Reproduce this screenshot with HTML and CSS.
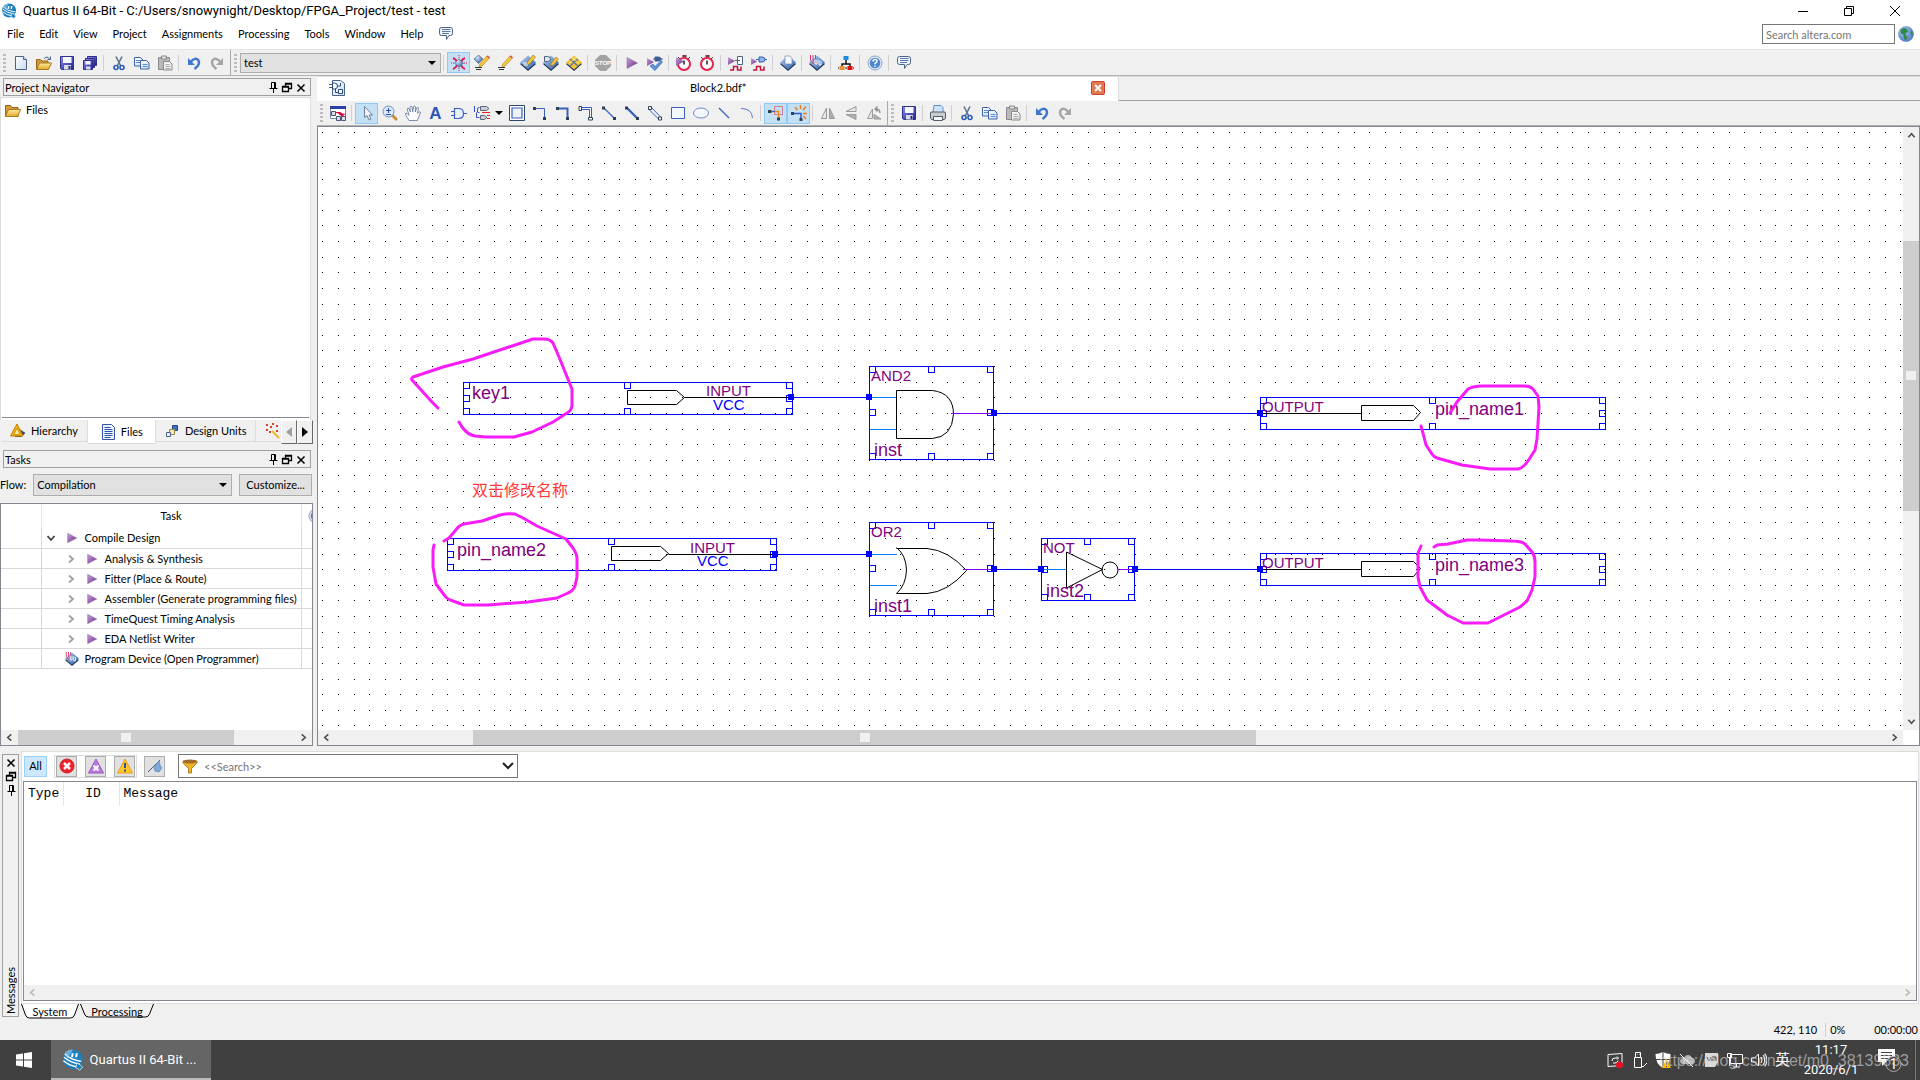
FILE: index.html
```html
<!DOCTYPE html>
<html lang="en">
<head>
    <meta charset="UTF-8">
    <meta name="viewport" content="width=device-width, initial-scale=1.0">
    <title>Quartus II 64-Bit</title>
    <link rel="stylesheet" href="styles.css">
</head>
<body>

<!-- Icon set -->
<svg class="sprite" aria-hidden="true">
    <defs>
        <linearGradient id="g-purple" x1="0" y1="0" x2="1" y2="1"><stop offset="0" stop-color="#c9a0dc"/><stop offset="1" stop-color="#6b2a86"/></linearGradient>
        <linearGradient id="g-blue" x1="0" y1="0" x2="1" y2="1"><stop offset="0" stop-color="#b9d2f5"/><stop offset="1" stop-color="#2c5da8"/></linearGradient>
        <linearGradient id="g-folder" x1="0" y1="0" x2="0" y2="1"><stop offset="0" stop-color="#ffe9a0"/><stop offset="1" stop-color="#e5a92c"/></linearGradient>
        <linearGradient id="g-save" x1="0" y1="0" x2="1" y2="1"><stop offset="0" stop-color="#8c8cf0"/><stop offset="1" stop-color="#20208c"/></linearGradient>
        <linearGradient id="g-page" x1="0" y1="0" x2="1" y2="1"><stop offset="0" stop-color="#fff"/><stop offset="1" stop-color="#c8dcf2"/></linearGradient>
        <radialGradient id="g-ball" cx=".35" cy=".3" r=".8"><stop offset="0" stop-color="#d5e6fb"/><stop offset="1" stop-color="#2d5796"/></radialGradient>
    </defs>

    <symbol id="i-logo" viewBox="0 0 16 16">
        <circle cx="8" cy="7.5" r="7" fill="#1b7fc0"/>
        <path d="M1.500 6Q6 10 13 11M1 8.500Q6 12.500 12 13M2 3.500Q6 8 14 9" stroke="#fff" fill="none"/>
        <path d="M7 3h1.500L8 6H6.500zM10 3h1.500L11 6H9.500z" fill="#fff"/>
        <path d="M2 3Q4 0 8 .5L4 7z" fill="#9ed0ee" opacity=".6"/>
        <path d="M11 10l4 3-2 2.500-3-2z" fill="#1b7fc0" stroke="#fff" stroke-width=".5"/>
    </symbol>
    <symbol id="i-chat" viewBox="0 0 16 16">
        <path d="M3.500 1.500h9q2 0 2 2v4q0 2-2 2h-1.500l-2.500 4v-4h-5q-2 0-2-2v-4q0-2 2-2z" fill="#eef4fc" stroke="#4a6286"/>
        <path d="M4 3.500h8.500M4 5.500h8.500M4 7.500h7" stroke="#5b7aa5" fill="none"/>
    </symbol>
    <symbol id="i-new" viewBox="0 0 16 16">
        <path d="M2.500 1.500h8l3 3v10h-11z" fill="url(#g-page)" stroke="#4a6286"/>
        <path d="M10.500 1.500v3h3" fill="#dce8f6" stroke="#4a6286"/>
    </symbol>
    <symbol id="i-open" viewBox="0 0 16 16">
        <path d="M.5 14.500v-10h4l1.500 1.500h6v8z" fill="#d49a3a" stroke="#94661a"/>
        <path d="M.5 14.500l3-6.500h12l-3 6.500z" fill="url(#g-folder)" stroke="#a87a20"/>
        <path d="M8 3.500q3-3 5.500 0M14.500 1.500v3h-3" stroke="#4a6286" fill="none"/>
    </symbol>
    <symbol id="i-folder" viewBox="0 0 16 16">
        <path d="M.5 13.500v-11h5l1.500 2h6v9z" fill="#d49a3a" stroke="#94661a"/>
        <path d="M.5 13.500l3-7h12l-3 7z" fill="url(#g-folder)" stroke="#a87a20"/>
    </symbol>
    <symbol id="i-save" viewBox="0 0 16 16">
        <path d="M1.500 1.500h13v13h-12l-1-1z" fill="url(#g-save)" stroke="#30308c"/>
        <path d="M4 2h8.500v6H4z" fill="#f4f7fd"/>
        <path d="M5 10h7v4.500H5z" fill="#d7dced"/><path d="M9.500 11h2v3h-2z" fill="#222a66"/>
    </symbol>
    <symbol id="i-saveall" viewBox="0 0 16 16">
        <path d="M5.500 1.500h9v9h-9z" fill="url(#g-save)" stroke="#30308c"/>
        <path d="M3.500 3.500h9v9h-9z" fill="url(#g-save)" stroke="#30308c"/>
        <path d="M1.500 5.500h9v9h-9z" fill="url(#g-save)" stroke="#30308c"/>
        <path d="M3.500 6h5v3.500h-5z" fill="#f4f7fd"/><path d="M4 11.500h4.500v3H4z" fill="#d7dced"/>
    </symbol>
    <symbol id="i-cut" viewBox="0 0 16 16">
        <path d="M5 1.500l4.500 9M11 1.500l-4.500 9" stroke="#5b7390" stroke-width="1.600" fill="none"/>
        <circle cx="5" cy="12.500" r="2" fill="none" stroke="#2b5bb8" stroke-width="1.600"/>
        <circle cx="11" cy="12.500" r="2" fill="none" stroke="#2b5bb8" stroke-width="1.600"/>
    </symbol>
    <symbol id="i-copy" viewBox="0 0 16 16">
        <path d="M.5 2.500h6l2.500 2.500v6h-8.500z" fill="url(#g-page)" stroke="#3d62ab"/>
        <path d="M6.500 5.500h6l2.500 2.500v6h-8.500z" fill="url(#g-page)" stroke="#3d62ab"/>
        <path d="M2 5.500h4M2 7.500h4M8.500 9.500h5M8.500 11.500h5" stroke="#5d8bd6"/>
    </symbol>
    <symbol id="i-paste" viewBox="0 0 16 16">
        <path d="M1.500 2.500h11v12h-11z" fill="#b9b9b9" stroke="#8a8a8a"/>
        <path d="M4.500 1h5v3h-5z" fill="#dedede" stroke="#8a8a8a"/>
        <path d="M6.500 6.500h6l2.500 2.500v6h-8.500z" fill="#f2f2f2" stroke="#8a8a8a"/>
        <path d="M8.500 9.500h4M8.500 11.500h5M8.500 13.500h5" stroke="#aaa"/>
    </symbol>
    <symbol id="i-undo" viewBox="0 0 16 16">
        <path d="M4.500 7q5-5.500 8-1.500 2 4-4 8.500" fill="none" stroke="#3f76cf" stroke-width="2.500"/>
        <path d="M2 3v7h7z" fill="#3f76cf"/>
    </symbol>
    <symbol id="i-redo" viewBox="0 0 16 16">
        <path d="M11.500 7q-5-5.500-8-1.500-2 4 4 8.500" fill="none" stroke="#a5a5a5" stroke-width="2.500"/>
        <path d="M14 3v7h-7z" fill="#a5a5a5"/>
    </symbol>
    <symbol id="i-chip" viewBox="0 0 16 16">
        <path d="M8 3l8 6-8 7-8-7z" fill="#1d3252"/>
        <path d="M8 .5l8 7-8 7-8-7z" fill="url(#g-blue)"/>
    </symbol>
    <symbol id="i-settings" viewBox="0 0 16 16">
        <path d="M2 3q3 1 4 4M14 3q-3 1-4 4M2 14q3-1 4-4M14 14q-3-1-4-4" stroke="#e8194e" stroke-width="2" fill="none"/>
        <path d="M8 0v3M8 13v3M0 8h3M13 8h3" stroke="#e8194e" stroke-dasharray="1 1"/>
        <path d="M8 4l4.500 4L8 12.500 3.500 8z" fill="url(#g-ball)" stroke="#33517e" stroke-width=".5"/>
    </symbol>
    <symbol id="i-pencil" viewBox="0 0 16 16">
        <path d="M13 1l2.500 2-7.500 8-3 1 .8-3z" fill="#f6c73c" stroke="#b0801c" stroke-width=".6"/>
        <path d="M12.500 1.500l1.200-1.200 2.300 2-1 1.200z" fill="#e2505c"/>
        <path d="M1 12.500h7M2 14.500h5" stroke="#333"/>
    </symbol>
    <symbol id="i-assign" viewBox="0 0 16 16">
        <path d="M4.500 0L9 4 4.500 8.500 0 4z" fill="url(#g-ball)" stroke="#26426e" stroke-width=".5"/>
        <use href="#i-pencil"/>
    </symbol>
    <symbol id="i-pins" viewBox="0 0 16 16">
        <use href="#i-chip"/>
        <path d="M13 0l2.500 2-6 7-3 1 1-3z" fill="#f6c73c" stroke="#9a6a10" stroke-width=".6"/>
        <path d="M3 8h4M4 10h4" stroke="#fff"/>
    </symbol>
    <symbol id="i-gatepen" viewBox="0 0 16 16">
        <use href="#i-chip"/>
        <path d="M1.500 1.500h3q3 0 3 2.500t-3 2.500h-3z" fill="#dde6f2" stroke="#51637c"/>
        <path d="M13 2l2.500 2-5 6-3 1 1-3z" fill="#f6c73c" stroke="#9a6a10" stroke-width=".6"/>
    </symbol>
    <symbol id="i-planner" viewBox="0 0 16 16">
        <path d="M8 3l8 6-8 7-8-7z" fill="#1d3252"/>
        <path d="M8 .5l8 7-8 7-8-7z" fill="#f5c22f"/>
        <path d="M4 4l8 7M12 4l-8 7" stroke="#5e7da8" stroke-width="1.600"/>
        <path d="M6 2.500l7 6M10 2.500l-7 6" stroke="#fff3c0" stroke-width=".6"/>
    </symbol>
    <symbol id="i-play" viewBox="0 0 16 16">
        <path d="M3 2.500l10.500 5.500L3 13.500z" fill="url(#g-purple)" stroke="#7d6b96" stroke-width=".5"/>
    </symbol>
    <symbol id="i-analyze" viewBox="0 0 16 16">
        <path d="M0 3l7 4-7 4z" fill="url(#g-purple)"/>
        <path d="M3 11l3-2 2 2.500 6-6 1.500 1.500L8 15.500z" fill="#5c93e0" stroke="#2c5da8" stroke-width=".6"/>
        <path d="M8 2h3q3 0 3 2t-3 2H8zM6 4h2M14 4h2" fill="#3f5f96" stroke="#3f5f96"/>
    </symbol>
    <symbol id="i-timer" viewBox="0 0 16 16">
        <path d="M7 0h3v2H7zM2 2l2 2M14 2l-2 2" fill="#e2244f" stroke="#444"/>
        <circle cx="8" cy="9" r="6" fill="#fff" stroke="#e2244f" stroke-width="2"/>
        <path d="M8 5.500v4" stroke="#222" stroke-width="1.500"/>
    </symbol>
    <symbol id="i-timeplay" viewBox="0 0 16 16">
        <use href="#i-timer"/><path d="M0 2l8 4.500L0 11z" fill="url(#g-purple)"/>
    </symbol>
    <symbol id="i-simrtl" viewBox="0 0 16 16">
        <path d="M0 2l7 4-7 4z" fill="url(#g-purple)"/>
        <path d="M9.500 1.500h5v8h-5zM7 5.500h5" fill="#fff" stroke="#4a6286"/>
        <path d="M2 15h3.500v-3.500h4V15H13v-3.500" fill="none" stroke="#c2143f" stroke-width="1.500"/>
    </symbol>
    <symbol id="i-simgate" viewBox="0 0 16 16">
        <path d="M0 3l6 3.500L0 10z" fill="url(#g-purple)"/>
        <path d="M8 2h3q3 0 3 2.500T11 7H8zM5 4.500h3M14 4.500h2" fill="#8fb2ea" stroke="#3a5fae"/>
        <path d="M2 15h3.500v-3.500h4V15H13v-3.500" fill="none" stroke="#c2143f" stroke-width="1.500"/>
    </symbol>
    <symbol id="i-chippage" viewBox="0 0 16 16">
        <use href="#i-chip"/>
        <path d="M5 1h5l2 2v6H5z" fill="#f5f8fc" stroke="#7d8da5" stroke-width=".7"/>
    </symbol>
    <symbol id="i-program" viewBox="0 0 16 16">
        <use href="#i-chip"/>
        <path d="M1.500 0v5q1 3 4 4M4 0v5q1 2 4 3M6.500 0v4" fill="none" stroke="#d8336c"/>
        <path d="M6 5v4h2V5m2 0v5h2V6" fill="none" stroke="#fff"/>
    </symbol>
    <symbol id="i-qsys" viewBox="0 0 16 16">
        <path d="M5.500 1h5v4h-5z" fill="#1b8be0"/><path d="M8 5v4M4 12V9h8v3" fill="none" stroke="#111" stroke-width="1.500"/>
        <path d="M1.500 11h5v4h-5z" fill="#f09030"/><path d="M9.500 11h5v4h-5z" fill="#e01010"/>
        <path d="M0 13h1M7 13h2M15 13h1" stroke="#111"/>
    </symbol>
    <symbol id="i-help" viewBox="0 0 16 16">
        <circle cx="8" cy="8" r="7" fill="#e4ecf6" stroke="#8aa5c8"/>
        <circle cx="8" cy="8" r="5.300" fill="#4e86cd"/>
        <path d="M6 6.500q0-2 2-2t2 1.800q0 1.200-2 2.200v.8M8 10.500v1.500" stroke="#fff" stroke-width="1.400" fill="none"/>
    </symbol>
    <symbol id="i-globe" viewBox="0 0 16 16">
        <circle cx="8" cy="8" r="7.800" fill="#6c9be0"/>
        <circle cx="8" cy="8" r="7.800" fill="url(#g-ball)" opacity=".5"/>
        <path d="M2.500 4l3-2 3.500 1 1 3-2.500 1 .5 3 1.500 1-1.500 3.500-2-2-.5-4-2.500-1zM13 4l2 3-1 3-1.500-3z" fill="#2c8c3c"/>
    </symbol>
    <symbol id="i-bdf" viewBox="0 0 16 16">
        <path d="M3.500.5h8l4 3v12h-12z" fill="url(#g-page)" stroke="#4a6286"/>
        <path d="M0 4.500h3M0 7.500h3" stroke="#4a6286"/>
        <path d="M3.500 3h2q3 0 3 3t-3 3h-2zM8.500 6h3V3M6.500 9v3.500h3M9.500 9.500h4v4h-4z" fill="#fff" stroke="#2b4a7c"/>
    </symbol>
    <symbol id="i-detach" viewBox="0 0 16 16">
        <path d="M.5 1.500h15v12H.5z" fill="#fff" stroke="#7b88a8"/><path d="M0 1h16v3H0z" fill="#2b3fa8"/>
        <path d="M1.500 6.500h4v4h-4zM6.500 11.500h4v4h-4zM11.500 11.500h4v4h-4z" fill="#d8dfec" stroke="#4a5876"/>
        <path d="M6 7.500h4.500q1.500 0 1.500 3M9.500 9h5L12 11.500z" fill="#d01040" stroke="#d01040"/>
    </symbol>
    <symbol id="i-arrow" viewBox="0 0 16 16">
        <path d="M5.500 1.500v11l2.500-2 2 4.500 2-1-2-4h3.500z" fill="#f4f6fa" stroke="#6d7f9c"/>
    </symbol>
    <symbol id="i-zoom" viewBox="0 0 16 16">
        <path d="M10 10l4 4" stroke="#c98a3a" stroke-width="3" stroke-linecap="round"/>
        <circle cx="6.500" cy="6.500" r="5.500" fill="#dce9fa" stroke="#6a8cc0"/>
        <path d="M4 5.500h5M6.500 3v5M4 9.500h5" stroke="#2b4fae"/>
    </symbol>
    <symbol id="i-hand" viewBox="0 0 16 16">
        <path d="M4 15.500L.7 10q-1-2.200 1.300-1.700l2 2-1.800-6.300q.6-1.700 1.800-.2L5.500 7l-.6-5q1-1.700 2.200-.2l.6 5L8.600 1.500q1.100-1.300 2 .3L10.300 7l1.600-4.300q1.600-.8 1.600.9l-1.100 4.700L14 6.800q1.900-.2 1.300 1.400l-3 7.300z" fill="#fbfcfe" stroke="#6d80a4" stroke-width=".9"/>
    </symbol>
    <symbol id="i-gate" viewBox="0 0 16 16">
        <path d="M3.500 3.500h4q5 0 5 5t-5 5h-4zM0 6.500h3M0 10.500h3M12.500 8.500h3.500" fill="#e8f0fc" stroke="#3a5fc0" stroke-width="1.200"/>
    </symbol>
    <symbol id="i-pintool" viewBox="0 0 16 16">
        <path d="M.5 1v6M3.500 7V4q0-1.500 2-1.500M5.500 7.500h-2M5.500 12.500h-3v-5" stroke="#3a4fc0" fill="none"/>
        <path d="M6.500 1.500h6l2.500 2-2.500 2h-6zM6.500 10.500h4l2.500 2-2.500 2h-4z" fill="#c7cdd6" stroke="#5c6778"/>
        <path d="M8 7.500h8M13 10.500h3M13 13.500h3" stroke="#e22"/>
    </symbol>
    <symbol id="i-block" viewBox="0 0 16 16">
        <path d="M.5.5h15v15H.5z" fill="#fff" stroke="#2b4a66"/><path d="M3 3h10v10H3z" fill="#eef3fb" stroke="#3a5fc0" stroke-width="1.200"/>
    </symbol>
    <symbol id="i-node" viewBox="0 0 16 16">
        <path d="M3 3.500h9.500V14" fill="none" stroke="#3a5fc0"/><path d="M1 2h3v3H1zM11 12h3v3h-3z" fill="#2b4055"/>
    </symbol>
    <symbol id="i-bus" viewBox="0 0 16 16">
        <path d="M3 3.500h9.500V14" fill="none" stroke="#3a5fc0" stroke-width="2"/><path d="M1 2h3v3H1zM11 12h3v3h-3z" fill="#2b4055"/>
    </symbol>
    <symbol id="i-conduit" viewBox="0 0 16 16">
        <path d="M3 2.500h10.500V13M3 4.500h8.500V13" fill="none" stroke="#3a5fc0"/><path d="M1 1.500h2.500v4H1zM10.500 12.500h4v2.500h-4z" fill="#fff" stroke="#2b4055"/>
    </symbol>
    <symbol id="i-dnode" viewBox="0 0 16 16">
        <path d="M3 3l10 10" stroke="#3a5fc0" stroke-width="1.200"/><path d="M1 1.500h3v3H1zM12 12h3v3h-3z" fill="#2b4055"/>
    </symbol>
    <symbol id="i-dbus" viewBox="0 0 16 16">
        <path d="M3 3l10 10" stroke="#3a5fc0" stroke-width="2.400"/><path d="M1 1.500h3v3H1zM12 12h3v3h-3z" fill="#2b4055"/>
    </symbol>
    <symbol id="i-dconduit" viewBox="0 0 16 16">
        <path d="M4 2l10.500 11M2 4.500L12.500 15" stroke="#3a5fc0"/><path d="M1.500 1.500h3v3h-3zM11.500 12h3v3h-3z" fill="#fff" stroke="#2b4055"/>
    </symbol>
    <symbol id="i-rect" viewBox="0 0 16 16"><path d="M1.500 2.500h13v11h-13z" fill="#f4f8fe" stroke="#3a5fc0"/></symbol>
    <symbol id="i-ellipse" viewBox="0 0 16 16"><ellipse cx="8" cy="8" rx="7.500" ry="5" fill="#f4f8fe" stroke="#6d8ad0"/></symbol>
    <symbol id="i-line" viewBox="0 0 16 16"><path d="M3 3l10 10" stroke="#3a5fc0" stroke-width="1.300"/></symbol>
    <symbol id="i-arc" viewBox="0 0 16 16"><path d="M2 3.500q11 0 11.500 9.500" fill="none" stroke="#5c78c0"/></symbol>
    <symbol id="i-rubber" viewBox="0 0 16 16">
        <path d="M6.500 1.500h8v8h-8z" fill="none" stroke="#e0203c" stroke-dasharray="1 1"/><path d="M4 6.500h6.500V13" fill="none" stroke="#ef8a1c" stroke-width="1.500"/>
        <path d="M0 5h3.500v3H0zM9 12.500h3v3H9z" fill="#2b4055"/><path d="M3 6.500h4" stroke="#3a5fc0"/>
    </symbol>
    <symbol id="i-partial" viewBox="0 0 16 16">
        <path d="M3 8.500h7V14" fill="none" stroke="#2f5ac8" stroke-width="1.500"/><path d="M0 7h3v3H0zM8.500 13h3v3h-3z" fill="#2b4055"/>
        <path d="M9.500 0v4M4 2l2.500 3M15 1.500L12 5M16 8.500h-4M15 14l-2.500-3" stroke="#ef7a1c" stroke-width="1.500"/>
    </symbol>
    <symbol id="i-fliph" viewBox="0 0 16 16"><path d="M6.500 3v10.500h-5z" fill="#e8e8e8" stroke="#9a9a9a"/><path d="M9.500 3v10.500h5z" fill="#b0b0b0" stroke="#9a9a9a"/></symbol>
    <symbol id="i-flipv" viewBox="0 0 16 16"><path d="M13 1.500v5H3z" fill="#e8e8e8" stroke="#9a9a9a"/><path d="M13 14.500v-5H3z" fill="#b0b0b0" stroke="#9a9a9a"/></symbol>
    <symbol id="i-rotate" viewBox="0 0 16 16"><path d="M6.500 4v9.500h-5z" fill="#e8e8e8" stroke="#9a9a9a"/><path d="M8 9.500v4.500h7z" fill="#b0b0b0" stroke="#9a9a9a"/><path d="M14 8q0-4-4-4M11.500 1.500L9 4l2.500 2.500" fill="none" stroke="#8a8a8a" stroke-width="1.300"/></symbol>
    <symbol id="i-print" viewBox="0 0 16 16">
        <path d="M4 .5h7l2 2V8H3z" fill="#cfe4fa" stroke="#5d8bd6"/>
        <path d="M1 7h14l.5 1v5l-1 1.500h-13L.5 13V8z" fill="#c9ccd2" stroke="#555d6b"/>
        <path d="M3.500 11.500h9v4h-9z" fill="#f3f5f8" stroke="#555d6b"/>
    </symbol>

    <symbol id="i-pin" viewBox="0 0 12 12"><path d="M4.500.5h4v6h-4zM7.500 1v5M2.500 6.500h8M6.500 7v4" fill="none" stroke="#000"/></symbol>
    <symbol id="i-float" viewBox="0 0 12 12"><path d="M4 2h7M4.500 4V1.500h6v5H8M1 5h7M1.500 4.500h6v5h-6z" fill="none" stroke="#000" stroke-width="1.300"/></symbol>
    <symbol id="i-close" viewBox="0 0 12 12"><path d="M2.500 2.500l7 7M9.500 2.500l-7 7" stroke="#000" stroke-width="1.500"/></symbol>
    <symbol id="i-chev" viewBox="0 0 10 10"><path d="M3 1.500L7 5 3 8.500" fill="none" stroke="currentColor" stroke-width="1.800"/></symbol>
    <symbol id="i-down" viewBox="0 0 8 4"><path d="M0 0h8L4 4z"/></symbol>

    <symbol id="i-hierarchy" viewBox="0 0 16 16">
        <path d="M8 5l7.500 5L11 14H5z" fill="#3a4a5e"/><path d="M7 1l6 12H.5z" fill="#f4b400" stroke="#c07c00"/><path d="M7 5l3 6.500H4z" fill="#ffe9a0" stroke="#b27500" stroke-width=".6"/>
    </symbol>
    <symbol id="i-doc" viewBox="0 0 16 16"><path d="M2.500.5h9l3 3v12h-12z" fill="#eef3fc" stroke="#3454a4"/><path d="M4.500 3.500h6M4.500 5.500h8M4.500 7.500h8M4.500 9.500h8M4.500 11.500h8M4.500 13.500h6" stroke="#2f50b4"/></symbol>
    <symbol id="i-units" viewBox="0 0 16 16"><path d="M8.500 2.500h5v5h-5z" fill="#3f6fc8" stroke="#2a4780"/><path d="M5.500 6.500h5v5h-5z" fill="#f3e9b8" stroke="#9a8a4a"/><path d="M2.500 9.500h4v4h-4z" fill="#e9eff9" stroke="#4a6286"/></symbol>
    <symbol id="i-wand" viewBox="0 0 16 16"><path d="M8 8l7 7" stroke="#e8b830" stroke-width="2"/><path d="M2 2h2M6 4h2M2 7h2M8 1h2M12 3h2M5 9h2M12 8h2" stroke="#d8402c" stroke-width="2"/></symbol>

    <symbol id="i-error" viewBox="0 0 16 16"><circle cx="8" cy="8" r="7" fill="#f0202c" stroke="#c8202a"/><path d="M5 5l6 6M11 5l-6 6" stroke="#fff" stroke-width="2.500"/></symbol>
    <symbol id="i-critical" viewBox="0 0 16 16"><path d="M8 1l7.500 14H.5z" fill="#b878dc" stroke="#9858c0"/><path d="M5.500 7.500l5 5M10.500 7.500l-5 5" stroke="#fff" stroke-width="2"/></symbol>
    <symbol id="i-warning" viewBox="0 0 16 16"><path d="M8 1l7.500 14H.5z" fill="#ffc62e" stroke="#e8a010"/><path d="M8 5v5M8 11.500v2" stroke="#2f5590" stroke-width="2"/></symbol>
    <symbol id="i-flag" viewBox="0 0 16 16"><path d="M1 14L13 2" stroke="#4a5a70"/><path d="M9 6l3-3 1 4 2 3-3 4-4-1-1-3z" fill="#7fa8dc" stroke="#5578ac" stroke-width=".6"/></symbol>
    <symbol id="i-funnel" viewBox="0 0 16 16"><path d="M1 3v2l5.500 5.500v4.500h3v-4.500L15 5V3z" fill="#f0b428" stroke="#a06c18" stroke-width=".8"/><ellipse cx="8" cy="3.500" rx="7" ry="2" fill="#a06c28"/></symbol>

    <!-- Schematic parts -->
    <symbol id="s-dots" overflow="visible"><path d="M0 0h1v1H0zM16 0h1v1h-1zM32 0h1v1h-1zM47 0h1v1h-1zM63 0h1v1h-1zM78 0h1v1h-1zM94 0h1v1h-1zM110 0h1v1h-1z"/></symbol>
    <symbol id="s-h" overflow="visible"><path class="handle" d="M.5.5h6v6h-6z"/></symbol>
    <symbol id="s-inbox" overflow="visible">
        <path class="outline" d="M.5.5h329v32H.5z"/>
        <use href="#s-h"/><use href="#s-h" y="13"/><use href="#s-h" y="26"/>
        <use href="#s-h" x="161"/><use href="#s-h" x="161" y="26"/>
        <use href="#s-h" x="323"/><use href="#s-h" x="323" y="13"/><use href="#s-h" x="323" y="26"/>
        <path class="shape" d="M164.500 8.500h49l8 7-8 7h-49z"/>
    </symbol>
    <symbol id="s-gatebox" overflow="visible">
        <path class="outline" d="M.5.5h124v93H.5z"/>
        <use href="#s-h"/><use href="#s-h" x="59"/><use href="#s-h" x="118"/>
        <use href="#s-h" y="43"/><use href="#s-h" x="118" y="43"/>
        <use href="#s-h" y="87"/><use href="#s-h" x="59" y="87"/><use href="#s-h" x="118" y="87"/>
    </symbol>
    <symbol id="s-out" overflow="visible">
        <path class="outline" d="M.5.5h345v32H.5z"/>
        <use href="#s-h"/><use href="#s-h" y="13"/><use href="#s-h" y="26"/>
        <use href="#s-h" x="169"/><use href="#s-h" x="169" y="26"/>
        <use href="#s-h" x="339"/><use href="#s-h" x="339" y="13"/><use href="#s-h" x="339" y="26"/>
        <path class="shape" d="M.5 16.500h101M101.500 8.500h52l7 7-7 8h-52z"/>
        <path class="node" d="M-3 13h6v6h-6z"/>
    </symbol>
</svg>

<div class="app">

    <header class="titlebar">
        <svg class="icon"><use href="#i-logo"/></svg>
        <h1>Quartus II 64-Bit - C:/Users/snowynight/Desktop/FPGA_Project/test - test</h1>
        <div class="window-buttons">
            <button aria-label="Minimize"><svg viewBox="0 0 12 12"><path d="M1 6.500h10"/></svg></button>
            <button aria-label="Restore"><svg viewBox="0 0 12 12"><path d="M1.500 3.500h7v7h-7zM3.500 3V1.500h7v7H9"/></svg></button>
            <button aria-label="Close"><svg viewBox="0 0 12 12"><path d="M1 1l10 10M11 1L1 11"/></svg></button>
        </div>
    </header>

    <nav class="menubar">
        <button>File</button>
        <button>Edit</button>
        <button>View</button>
        <button>Project</button>
        <button>Assignments</button>
        <button>Processing</button>
        <button>Tools</button>
        <button>Window</button>
        <button>Help</button>
        <button aria-label="Feedback"><svg class="icon"><use href="#i-chat"/></svg></button>
        <div class="site-search">
            <input type="text" placeholder="Search altera.com" aria-label="Search altera.com">
            <button aria-label="Go"><svg class="icon"><use href="#i-globe"/></svg></button>
        </div>
    </nav>

    <div class="toolbar main-toolbar">
        <i class="grip"></i>
        <button aria-label="New"><svg class="icon"><use href="#i-new"/></svg></button>
        <button aria-label="Open"><svg class="icon"><use href="#i-open"/></svg></button>
        <button aria-label="Save"><svg class="icon"><use href="#i-save"/></svg></button>
        <button aria-label="Save all"><svg class="icon"><use href="#i-saveall"/></svg></button>
        <i class="sep"></i>
        <button aria-label="Cut"><svg class="icon"><use href="#i-cut"/></svg></button>
        <button aria-label="Copy"><svg class="icon"><use href="#i-copy"/></svg></button>
        <button aria-label="Paste"><svg class="icon"><use href="#i-paste"/></svg></button>
        <i class="sep"></i>
        <button aria-label="Undo"><svg class="icon"><use href="#i-undo"/></svg></button>
        <button aria-label="Redo"><svg class="icon"><use href="#i-redo"/></svg></button>
        <i class="divider"></i>
        <i class="grip"></i>
        <span class="combo revision">
            <select aria-label="Revision"><option>test</option></select>
            <svg><use href="#i-down"/></svg>
        </span>
        <i class="sep"></i>
        <button class="active" aria-label="Settings"><svg class="icon"><use href="#i-settings"/></svg></button>
        <button aria-label="Assignment editor"><svg class="icon"><use href="#i-assign"/></svg></button>
        <button aria-label="Edit"><svg class="icon"><use href="#i-pencil"/></svg></button>
        <button aria-label="Pin planner"><svg class="icon"><use href="#i-pins"/></svg></button>
        <button aria-label="Partitions"><svg class="icon"><use href="#i-gatepen"/></svg></button>
        <button aria-label="Chip planner"><svg class="icon"><use href="#i-planner"/></svg></button>
        <i class="sep"></i>
        <button aria-label="Stop"><svg class="icon" viewBox="0 0 16 16"><path d="M5 0h6l5 5v6l-5 5H5l-5-5V5z" fill="#a3a3a3"/><text x="8" y="10" text-anchor="middle" class="icon-stop">STOP</text></svg></button>
        <i class="sep"></i>
        <button aria-label="Start compilation"><svg class="icon"><use href="#i-play"/></svg></button>
        <button aria-label="Start analysis"><svg class="icon"><use href="#i-analyze"/></svg></button>
        <i class="sep"></i>
        <button aria-label="Start timing"><svg class="icon"><use href="#i-timeplay"/></svg></button>
        <button aria-label="TimeQuest"><svg class="icon"><use href="#i-timer"/></svg></button>
        <i class="sep"></i>
        <button aria-label="RTL simulation"><svg class="icon"><use href="#i-simrtl"/></svg></button>
        <button aria-label="Gate simulation"><svg class="icon"><use href="#i-simgate"/></svg></button>
        <i class="sep"></i>
        <button aria-label="Report"><svg class="icon"><use href="#i-chippage"/></svg></button>
        <i class="sep"></i>
        <button aria-label="Programmer"><svg class="icon"><use href="#i-program"/></svg></button>
        <i class="sep"></i>
        <button aria-label="Qsys"><svg class="icon"><use href="#i-qsys"/></svg></button>
        <i class="sep"></i>
        <button aria-label="Help"><svg class="icon"><use href="#i-help"/></svg></button>
        <i class="sep"></i>
        <button aria-label="Feedback"><svg class="icon"><use href="#i-chat"/></svg></button>
    </div>

    <main class="workspace">

        <aside class="dock">
            <section class="navigator">
                <div class="dock-title">
                    <h2>Project Navigator</h2>
                    <button aria-label="Pin"><svg><use href="#i-pin"/></svg></button>
                    <button aria-label="Float"><svg><use href="#i-float"/></svg></button>
                    <button aria-label="Close"><svg><use href="#i-close"/></svg></button>
                </div>
                <div class="file-tree">
                    <div class="file-list">
                        <svg class="icon"><use href="#i-folder"/></svg>
                        <span>Files</span>
                    </div>
                </div>
                <div class="dock-tabs">
                    <button><svg class="icon"><use href="#i-hierarchy"/></svg>Hierarchy</button>
                    <button class="current"><svg class="icon"><use href="#i-doc"/></svg>Files</button>
                    <button><svg class="icon"><use href="#i-units"/></svg>Design Units</button>
                    <button class="cut-tab" aria-label="IP Components"><svg class="icon"><use href="#i-wand"/></svg></button>
                    <div class="tab-scroll">
                        <button class="off" aria-label="Previous tabs"><svg viewBox="0 0 8 12"><path d="M7 1v10L1 6z"/></svg></button>
                        <button aria-label="Next tabs"><svg viewBox="0 0 8 12"><path d="M1 1v10l6-5z"/></svg></button>
                    </div>
                </div>
            </section>

            <section class="tasks">
                <div class="dock-title">
                    <h2>Tasks</h2>
                    <button aria-label="Pin"><svg><use href="#i-pin"/></svg></button>
                    <button aria-label="Float"><svg><use href="#i-float"/></svg></button>
                    <button aria-label="Close"><svg><use href="#i-close"/></svg></button>
                </div>
                <div class="flow-row">
                    <label for="flow">Flow:</label>
                    <span class="combo">
                        <select id="flow"><option>Compilation</option></select>
                        <svg><use href="#i-down"/></svg>
                    </span>
                    <button class="customize">Customize...</button>
                </div>
                <div class="task-box">
                    <table class="task-table">
                        <colgroup><col class="c-status"><col class="c-task"><col></colgroup>
                        <thead>
                            <tr><th></th><th>Task</th><th><svg class="icon"><use href="#i-help"/></svg></th></tr>
                        </thead>
                        <tbody>
                            <tr><td></td><td><div class="task"><svg class="chev open"><use href="#i-chev"/></svg><svg class="icon"><use href="#i-play"/></svg>Compile Design</div></td><td></td></tr>
                            <tr><td></td><td><div class="task sub"><svg class="chev"><use href="#i-chev"/></svg><svg class="icon"><use href="#i-play"/></svg>Analysis &amp; Synthesis</div></td><td></td></tr>
                            <tr><td></td><td><div class="task sub"><svg class="chev"><use href="#i-chev"/></svg><svg class="icon"><use href="#i-play"/></svg>Fitter (Place &amp; Route)</div></td><td></td></tr>
                            <tr><td></td><td><div class="task sub"><svg class="chev"><use href="#i-chev"/></svg><svg class="icon"><use href="#i-play"/></svg>Assembler (Generate programming files)</div></td><td></td></tr>
                            <tr><td></td><td><div class="task sub"><svg class="chev"><use href="#i-chev"/></svg><svg class="icon"><use href="#i-play"/></svg>TimeQuest Timing Analysis</div></td><td></td></tr>
                            <tr><td></td><td><div class="task sub"><svg class="chev"><use href="#i-chev"/></svg><svg class="icon"><use href="#i-play"/></svg>EDA Netlist Writer</div></td><td></td></tr>
                            <tr><td></td><td><div class="task leaf"><svg class="icon"><use href="#i-program"/></svg>Program Device (Open Programmer)</div></td><td></td></tr>
                        </tbody>
                    </table>
                    <div class="scrollbar">
                        <svg class="arrow left"><use href="#i-chev"/></svg>
                        <div class="track"><div class="thumb thumb-tasks"></div></div>
                        <svg class="arrow"><use href="#i-chev"/></svg>
                    </div>
                </div>
            </section>
        </aside>

        <section class="editor">
            <div class="editor-tabs">
                <div class="editor-tab">
                    <svg class="icon"><use href="#i-bdf"/></svg>
                    <span>Block2.bdf*</span>
                    <button aria-label="Close tab"><svg viewBox="0 0 12 12"><path d="M3 3l6 6M9 3L3 9"/></svg></button>
                </div>
            </div>

            <div class="toolbar">
                <i class="grip"></i>
                <button aria-label="Detach window"><svg class="icon"><use href="#i-detach"/></svg></button>
                <i class="sep"></i>
                <button class="active" aria-label="Select"><svg class="icon"><use href="#i-arrow"/></svg></button>
                <button aria-label="Zoom"><svg class="icon"><use href="#i-zoom"/></svg></button>
                <button aria-label="Hand"><svg class="icon"><use href="#i-hand"/></svg></button>
                <button class="letter" aria-label="Text">A</button>
                <button aria-label="Symbol"><svg class="icon"><use href="#i-gate"/></svg></button>
                <button aria-label="Pin tool"><svg class="icon"><use href="#i-pintool"/></svg></button>
                <button class="drop" aria-label="Pin types"><svg><use href="#i-down"/></svg></button>
                <button aria-label="Block"><svg class="icon"><use href="#i-block"/></svg></button>
                <button aria-label="Orthogonal node"><svg class="icon"><use href="#i-node"/></svg></button>
                <button aria-label="Orthogonal bus"><svg class="icon"><use href="#i-bus"/></svg></button>
                <button aria-label="Orthogonal conduit"><svg class="icon"><use href="#i-conduit"/></svg></button>
                <button aria-label="Diagonal node"><svg class="icon"><use href="#i-dnode"/></svg></button>
                <button aria-label="Diagonal bus"><svg class="icon"><use href="#i-dbus"/></svg></button>
                <button aria-label="Diagonal conduit"><svg class="icon"><use href="#i-dconduit"/></svg></button>
                <button aria-label="Rectangle"><svg class="icon"><use href="#i-rect"/></svg></button>
                <button aria-label="Oval"><svg class="icon"><use href="#i-ellipse"/></svg></button>
                <button aria-label="Line"><svg class="icon"><use href="#i-line"/></svg></button>
                <button aria-label="Arc"><svg class="icon"><use href="#i-arc"/></svg></button>
                <i class="sep"></i>
                <button class="active" aria-label="Rubberbanding"><svg class="icon"><use href="#i-rubber"/></svg></button>
                <button class="active" aria-label="Partial line selection"><svg class="icon"><use href="#i-partial"/></svg></button>
                <i class="sep"></i>
                <button aria-label="Flip horizontal"><svg class="icon"><use href="#i-fliph"/></svg></button>
                <button aria-label="Flip vertical"><svg class="icon"><use href="#i-flipv"/></svg></button>
                <button aria-label="Rotate left"><svg class="icon"><use href="#i-rotate"/></svg></button>
                <i class="divider"></i>
                <i class="grip"></i>
                <button aria-label="Save"><svg class="icon"><use href="#i-save"/></svg></button>
                <i class="sep"></i>
                <button aria-label="Print"><svg class="icon"><use href="#i-print"/></svg></button>
                <i class="sep"></i>
                <button aria-label="Cut"><svg class="icon"><use href="#i-cut"/></svg></button>
                <button aria-label="Copy"><svg class="icon"><use href="#i-copy"/></svg></button>
                <button aria-label="Paste"><svg class="icon"><use href="#i-paste"/></svg></button>
                <i class="sep"></i>
                <button aria-label="Undo"><svg class="icon"><use href="#i-undo"/></svg></button>
                <button aria-label="Redo"><svg class="icon"><use href="#i-redo"/></svg></button>
            </div>

            <div class="canvas-box">
                <svg class="schematic">
                    <defs>
                        <pattern id="grid" x="4" y="-42" width="125" height="125" patternUnits="userSpaceOnUse">
                            <g shape-rendering="crispEdges">
                                <use href="#s-dots"/><use href="#s-dots" y="15"/><use href="#s-dots" y="31"/><use href="#s-dots" y="47"/>
                                <use href="#s-dots" y="62"/><use href="#s-dots" y="78"/><use href="#s-dots" y="94"/><use href="#s-dots" y="109"/>
                            </g>
                        </pattern>
                    </defs>
                    <rect width="100%" height="100%" fill="url(#grid)"/>

                    <!-- Wires -->
                    <path class="wire" d="M475 270.500h76M678 286.500h262M459 427.500h92M678 442.500h43M819 442.500h121"/>

                    <!-- Input pins -->
                    <use href="#s-inbox" x="145" y="255"/>
                    <path class="shape" d="M366.500 270.500h106"/>
                    <path class="node" d="M470 267h6v6h-6z"/>
                    <text class="part purple" x="388" y="269">INPUT</text>
                    <text class="part blue" x="395" y="283">VCC</text>
                    <text class="name" x="154" y="272">key1</text>
                    <use href="#s-inbox" x="129" y="411"/>
                    <path class="shape" d="M350.500 427.500h106"/>
                    <path class="node" d="M454 424h6v6h-6z"/>
                    <text class="part purple" x="372" y="426">INPUT</text>
                    <text class="part blue" x="379" y="439">VCC</text>
                    <text class="name" x="139" y="429">pin_name2</text>

                    <!-- AND2 -->
                    <use href="#s-gatebox" x="551" y="239"/>
                    <path class="in" d="M552 270.500h26M552 302.500h26"/>
                    <path class="shape" d="M578.500 263.500h36Q635.500 266 635.500 287.500 634 310 614.500 311.500h-36z"/>
                    <path class="out" d="M633 286.500h42"/>
                    <path class="node" d="M548 267h6v6h-6zM673 283h6v6h-6z"/>
                    <text class="part purple" x="553" y="254">AND2</text>
                    <text class="name" x="556" y="329">inst</text>

                    <!-- OR2 -->
                    <use href="#s-gatebox" x="551" y="395"/>
                    <path class="in" d="M552 427.500h27M552 458.500h27"/>
                    <path class="shape" d="M578.500 420.500Q588 428 588.500 443 588 458 578.500 466.500H609Q630 465 648.500 443.500 630 423 609 421.500H578.500"/>
                    <path class="out" d="M645 442.500h30"/>
                    <path class="node" d="M548 424h6v6h-6zM673 439h6v6h-6z"/>
                    <text class="part purple" x="553" y="410">OR2</text>
                    <text class="name" x="556" y="485">inst1</text>

                    <!-- NOT -->
                    <path class="outline" d="M723.500 411.500h93v62h-93z"/>
                    <use href="#s-h" x="723" y="411"/><use href="#s-h" x="766" y="411"/><use href="#s-h" x="810" y="411"/>
                    <use href="#s-h" x="723" y="439"/><use href="#s-h" x="810" y="439"/>
                    <use href="#s-h" x="723" y="467"/><use href="#s-h" x="766" y="467"/><use href="#s-h" x="810" y="467"/>
                    <path class="in" d="M724 442.500h24"/>
                    <path class="shape" d="M748.500 425v36l36-18.500z"/>
                    <circle class="shape" cx="792" cy="443" r="8"/>
                    <path class="out" d="M800 442.500h16"/>
                    <path class="node" d="M720 439h6v6h-6zM814 439h6v6h-6z"/>
                    <text class="part purple" x="725" y="426">NOT</text>
                    <text class="name" x="728" y="470">inst2</text>

                    <!-- Output pins -->
                    <use href="#s-out" x="942" y="270"/>
                    <text class="part purple" x="944" y="285">OUTPUT</text>
                    <text class="name" x="1117" y="288">pin_name1</text>
                    <use href="#s-out" x="942" y="426"/>
                    <text class="part purple" x="944" y="441">OUTPUT</text>
                    <text class="name" x="1117" y="444">pin_name3</text>

                    <!-- Pen notes -->
                    <g transform="translate(-318 -127)">
                        <path class="pen" d="M438 408L432 402 412 380Q411 378 413 377L443 367 473 359 533 339H544Q550 339 553 343L559 357 572 389V406Q571 411 567 413L553 422 532 432 514 437H486L475 436Q468 435 462 427L459 422"/>
                        <path class="pen" d="M444 541L449 538 455 531Q459 525 464 524L482 521 500 515Q508 513 515 514L523 518 537 526 566 539 573 548Q577 554 577 558V577L575 586Q573 591 568 593L557 598 528 602 488 605H464L453 601Q447 599 445 596L436 584 433 567V550L434 545"/>
                        <path class="pen" d="M1450 413L1457 402 1468 389Q1474 386 1482 386H1525Q1530 386 1533 389L1538 396 1539 407 1537 439 1535 450 1528 461Q1523 468 1518 469H1490L1462 465 1437 458Q1434 457 1432 454L1426 445 1424 437 1421 426"/>
                        <path class="pen" d="M1434 547L1437 545 1448 544 1467 540H1478L1512 541Q1521 541 1525 544L1532 552Q1535 556 1535 562V577L1532 590 1527 601 1520 607 1504 615 1488 623H1463L1447 615 1427 600 1420 587 1418 577V553L1421 546"/>
                    </g>
                    <text class="note" x="154" y="369">双击修改名称</text>
                </svg>
                <div class="scrollbar vertical">
                    <svg class="arrow up"><use href="#i-chev"/></svg>
                    <div class="track"><div class="thumb thumb-v"></div></div>
                    <svg class="arrow down"><use href="#i-chev"/></svg>
                </div>
                <div class="scrollbar">
                    <svg class="arrow left"><use href="#i-chev"/></svg>
                    <div class="track"><div class="thumb thumb-h"></div></div>
                    <svg class="arrow"><use href="#i-chev"/></svg>
                </div>
            </div>
        </section>
    </main>

    <section class="messages">
        <div class="side-title">
            <button aria-label="Close"><svg><use href="#i-close"/></svg></button>
            <button aria-label="Float"><svg><use href="#i-float"/></svg></button>
            <button aria-label="Pin"><svg><use href="#i-pin"/></svg></button>
            <h2>Messages</h2>
        </div>
        <div class="message-area">
            <div class="message-panel">
                <div class="message-tools">
                    <button class="all">All</button>
                    <div class="filter-group">
                        <button aria-label="Errors"><svg class="icon"><use href="#i-error"/></svg></button>
                        <button aria-label="Critical warnings"><svg class="icon"><use href="#i-critical"/></svg></button>
                        <button aria-label="Warnings"><svg class="icon"><use href="#i-warning"/></svg></button>
                    </div>
                    <button aria-label="Flagged"><svg class="icon"><use href="#i-flag"/></svg></button>
                    <div class="message-search">
                        <svg class="icon"><use href="#i-funnel"/></svg>
                        <input type="text" placeholder="&lt;&lt;Search&gt;&gt;" aria-label="Search messages">
                        <svg class="caret" viewBox="0 0 12 8"><path d="M1 1l5 5 5-5"/></svg>
                    </div>
                </div>
                <div class="message-box">
                    <table class="message-table">
                        <thead><tr><th>Type</th><th>ID</th><th>Message</th></tr></thead>
                    </table>
                    <div class="scrollbar off">
                        <svg class="arrow left"><use href="#i-chev"/></svg>
                        <div class="track"></div>
                        <svg class="arrow"><use href="#i-chev"/></svg>
                    </div>
                </div>
            </div>
            <div class="message-tabs">
                <button class="current"><svg viewBox="0 0 58 15" preserveAspectRatio="none"><path d="M.5 0l4 11q1 3 4 3h41q3 0 4-3l4-11"/></svg><span>System</span></button>
                <button><svg viewBox="0 0 74 15" preserveAspectRatio="none"><path d="M.5 0l4 10q1 3 4 3h57q3 0 4-3l4-10"/></svg><span>Processing</span></button>
            </div>
        </div>
    </section>

    <footer class="statusbar">
        <span>422, 110</span>
        <span class="percent">0%</span>
        <span>00:00:00</span>
    </footer>

    <div class="taskbar">
        <button class="start" aria-label="Start"><svg viewBox="0 0 16 16"><path d="M0 2.500l7-1v6H0zM8 1.300L16 0v7.500H8zM0 8.500h7v6l-7-1zM8 8.500h8V16l-8-1.300z"/></svg></button>
        <button class="running"><svg><use href="#i-logo"/></svg>Quartus II 64-Bit ...</button>
        <div class="tray">
            <svg viewBox="0 0 16 16"><path d="M1 2.500l14-1v12l-14 1zM5 9q0-3 3-3h3M11 8.500q0 2.500-3 2.500H6M10 4.500l1.500 1.500L10 7.500"/><circle cx="12.500" cy="13" r="3.500" class="rec"/></svg>
            <svg viewBox="0 0 16 16"><path d="M4.500.5h5v5h-5zM3.500 5.500h7v10h-7zM6 2.500h.5M8 2.500h.5M10 13l2 2 4-4"/></svg>
            <svg viewBox="0 0 16 16"><path class="solid" d="M8 0q4 2 7.500 2 0 10-7.500 14Q.5 12 .5 2 4 2 8 0z"/><path class="ink" d="M8 0v16M.5 7.500h15"/><path class="warn" d="M11.500 7l4.500 9H7z"/><path class="ink" d="M11.500 10v3M11.500 14v1"/></svg>
            <svg viewBox="0 0 16 16"><path class="solid" d="M4 12q-3 0-3-3t4-3q1-3 4-3t4 3q3 0 3 3t-3 3z" opacity=".6"/><path d="M1 2l13 13"/></svg>
            <svg viewBox="0 0 16 16"><path class="solid" d="M2 1h13v9l-3 5H2z" opacity=".8"/><path class="ink" d="M4 5l2 4 2-4M9 9V5h4v4M11 5v4"/></svg>
            <svg viewBox="0 0 16 16"><path d="M3.500 2.500h12v9h-12zM9.500 12v3M6 15h7M.5 1.500h4v4h-4zM2.500 5v9"/></svg>
            <svg viewBox="0 0 16 16"><path d="M.5 6v4h3l4 4V2l-4 4zM10 5q2 3 0 6M12 3q3.500 5 0 10M14 1.500q4 6.500 0 13"/></svg>
            <span class="ime">英</span>
            <time class="clock">11:17<br>2020/6/1</time>
            <svg class="notice" viewBox="0 0 24 24"><path class="solid" d="M0 1h17v13H8l-4 4v-4H0z"/><path class="ink" d="M3 4.500h11M3 7.500h11M3 10.500h8"/><circle cx="15.500" cy="16" r="7.500" class="badge"/><text x="15.500" y="21" text-anchor="middle">1</text></svg>
        </div>
        <div class="watermark">https://blog.csdn.net/m0_38139833</div>
    </div>
</div>

</body>
</html>
```
FILE: styles.css
```css
* {
    box-sizing: border-box;
}

body {
    margin: 0;
    font-family: Lato, "Noto Sans CJK SC", sans-serif;
    font-size: 11px;
    line-height: 14px;
    color: #000;
    background-color: #f0f0f0;
}

h1, h2 {
    margin: 0;
    font-size: inherit;
    font-weight: normal;
}

button, input, select {
    margin: 0;
    padding: 0;
    border: none;
    border-radius: 0;
    background: none;
    font: inherit;
    color: inherit;
}

button {
    display: flex;
    align-items: center;
    justify-content: center;
}

svg {
    display: block;
    flex-shrink: 0;
}

.sprite {
    position: absolute;
    width: 0;
    height: 0;
}

.icon {
    width: 16px;
    height: 16px;
}

.icon-stop {
    font: bold 6px "Liberation Sans", sans-serif;
    fill: #fff;
}

.app {
    display: flex;
    flex-direction: column;
    height: 100vh;
    overflow: hidden;
}

/* Title bar */
.titlebar {
    display: flex;
    align-items: center;
    height: 22px;
    padding: 0 2px 0 1px;
    background-color: #fff;
}

.titlebar h1 {
    flex: 1;
    margin-left: 6px;
    font: 13px/20px Roboto, sans-serif;
}

.window-buttons {
    display: flex;
}

.window-buttons button {
    width: 46px;
    height: 20px;
}

.window-buttons svg {
    width: 12px;
    height: 12px;
    fill: none;
    stroke: #000;
}

/* Menu */
.menubar {
    display: flex;
    align-items: center;
    gap: 15px;
    height: 28px;
    padding: 0 6px 3px 7px;
    border-bottom: 1px solid #e4e4e4;
    background-color: #fff;
}

.site-search {
    display: flex;
    align-items: center;
    gap: 3px;
    margin-left: auto;
}

.site-search input {
    width: 133px;
    height: 20px;
    padding: 0 3px;
    border: 1px solid #767676;
    background-color: #fff;
}

input::placeholder {
    color: #757575;
    opacity: 1;
}

/* Toolbars */
.toolbar {
    display: flex;
    align-items: center;
    height: 26px;
    border-bottom: 1px solid #b0b0b0;
    background-color: #f0f0f0;
}

.toolbar button {
    width: 23px;
    height: 21px;
    border: 1px solid transparent;
}

.toolbar button.active {
    border-color: #90c8f6;
    background-color: #c4e0f5;
}

.toolbar button.drop {
    width: 12px;
}

.toolbar button.letter {
    font: bold 17px/19px "Liberation Sans", sans-serif;
    color: #2f55b8;
}

.drop svg {
    width: 8px;
    height: 4px;
}

.grip {
    width: 3px;
    height: 18px;
    margin: 0 3px;
    background: repeating-linear-gradient(#bdbdbd 0 2px, transparent 2px 4px);
}

.sep {
    width: 6px;
    height: 16px;
    background: linear-gradient(#d0d0d0, #d0d0d0) 2px 0 / 1px 100% no-repeat;
}

.divider {
    width: 1px;
    height: 25px;
    margin-left: 2px;
    background-color: #a8a8a8;
}

.combo {
    position: relative;
    display: block;
    height: 20px;
}

.combo select {
    width: 100%;
    height: 100%;
    padding: 0 3px;
    border: 1px solid #adadad;
    background-color: #e1e1e1;
    appearance: none;
}

.combo svg {
    position: absolute;
    right: 5px;
    top: 50%;
    width: 8px;
    height: 4px;
    margin-top: -2px;
}

.revision {
    width: 201px;
}

/* Workspace */
.workspace {
    flex: 1;
    display: flex;
    gap: 4px;
    min-height: 0;
}

.dock {
    display: flex;
    flex-direction: column;
    width: 313px;
    padding-top: 2px;
}

.dock-title {
    display: flex;
    align-items: center;
    height: 18px;
    margin: 0 2px 0 3px;
    padding: 1px 2px 0 1px;
    border: 1px solid #a0a0a0;
}

.dock-title h2 {
    flex: 1;
}

.dock-title button {
    width: 14px;
}

.dock-title svg, .side-title svg {
    width: 12px;
    height: 12px;
}

.navigator {
    flex: 1;
    display: flex;
    flex-direction: column;
}

.file-tree {
    flex: 1;
    margin: 1px 2px 0 0;
    padding: 0 1px 2px;
    border: 1px solid #dcdcdc;
    border-bottom: none;
    background-color: #fff;
}

.file-list {
    display: flex;
    align-items: flex-start;
    gap: 5px;
    height: 100%;
    padding: 5px 3px;
    border-bottom: 1px solid #828790;
}

.dock-tabs {
    position: relative;
    display: flex;
    align-items: flex-start;
    height: 30px;
    padding-left: 2px;
    overflow: hidden;
}

.dock-tabs > button {
    gap: 5px;
    height: 22px;
    padding: 0 9px 0 8px;
    border: 1px solid #dcdcdc;
    border-left: none;
    border-top: none;
}

.dock-tabs > button.current {
    height: 24px;
    padding: 0 12px;
    background-color: #fff;
}

.dock-tabs > button.cut-tab {
    flex: 1;
    justify-content: flex-start;
}

.tab-scroll {
    position: absolute;
    right: 0;
    top: 0;
    display: flex;
}

.tab-scroll button {
    width: 16px;
    height: 24px;
    border: 1px solid #fff;
    border-right-color: #696969;
    border-bottom-color: #696969;
    background-color: #f0f0f0;
}

.tab-scroll svg {
    width: 8px;
    height: 12px;
}

.tab-scroll .off {
    fill: #a0a0a0;
}

/* Tasks */
.tasks {
    display: flex;
    flex-direction: column;
    height: 296px;
}

.flow-row {
    display: flex;
    align-items: center;
    gap: 7px;
    height: 22px;
    margin: 6px 1px 7px 0;
}

.flow-row .combo {
    flex: 1;
    height: 22px;
}

.customize {
    width: 73px;
    height: 22px;
    border: 1px solid #adadad;
    background-color: #e1e1e1;
}

.task-box {
    flex: 1;
    display: flex;
    flex-direction: column;
    justify-content: space-between;
    border: 1px solid #828790;
    background-color: #fff;
    overflow: hidden;
}

.task-table {
    width: 100%;
    border-collapse: collapse;
    table-layout: fixed;
}

.c-status {
    width: 40px;
}

.c-task {
    width: 260px;
}

.task-table th {
    height: 24px;
    padding: 0;
    border-right: 1px solid #e5e5e5;
    font-weight: normal;
}

.task-table th .icon {
    margin-left: 6px;
}

.task-table td {
    height: 20px;
    padding: 1px 0 0;
    border-right: 1px solid #d9d9d9;
    border-bottom: 1px solid #d9d9d9;
}

.task-table th:last-child, .task-table td:last-child {
    border-right: none;
}

.task {
    display: flex;
    align-items: center;
    gap: 5px;
    padding-left: 1px;
    white-space: nowrap;
}

.task.sub {
    padding-left: 21px;
}

.task.leaf {
    padding-left: 22px;
}

.task .icon {
    height: 14px;
}

.chev {
    width: 16px;
    height: 10px;
    color: #a0a0a0;
}

.chev.open {
    color: #404040;
    transform: rotate(90deg);
}

/* Scroll bars */
.scrollbar {
    display: flex;
    align-items: center;
    height: 15px;
    color: #505050;
    background-color: #f0f0f0;
}

.scrollbar.off {
    color: #b8b8b8;
}

.arrow {
    width: 17px;
    height: 9px;
}

.arrow.left {
    transform: rotate(180deg);
}

.arrow.up {
    transform: rotate(-90deg);
}

.arrow.down {
    transform: rotate(90deg);
}

.track {
    flex: 1;
    align-self: stretch;
}

.thumb {
    height: 100%;
    background: linear-gradient(#f0f0f0, #f0f0f0) center / 10px 9px no-repeat #cdcdcd;
}

.thumb-tasks {
    width: 78%;
}

.thumb-h {
    width: 50.5%;
    margin-left: 8.9%;
}

.scrollbar.vertical {
    flex-direction: column;
    width: 16px;
    height: auto;
}

.vertical .arrow {
    height: 17px;
    padding: 4px 0;
}

.vertical .track {
    display: flex;
    flex-direction: column;
}

.vertical .track::before {
    content: "";
    height: 17%;
}

.thumb-v {
    height: 47.5%;
}

/* Editor */
.editor {
    flex: 1;
    display: flex;
    flex-direction: column;
    min-width: 0;
    border-top: 1px solid #dcdcdc;
}

.editor-tabs {
    height: 24px;
    border-bottom: 1px solid #a0a0a0;
}

.editor-tab {
    display: flex;
    align-items: center;
    justify-content: space-between;
    width: 50%;
    height: 24px;
    padding: 2px 12px 4px;
    border-right: 1px solid #dcdcdc;
    background-color: #fff;
}

.editor-tab button {
    width: 14px;
    height: 14px;
    border: 1px solid #d0402c;
    border-radius: 2px;
    background-color: #e07850;
}

.editor-tab button svg {
    width: 12px;
    stroke: #fff;
    stroke-width: 2;
}

.canvas-box {
    flex: 1;
    display: grid;
    grid-template-columns: 1fr 16px;
    grid-template-rows: 1fr 15px;
    min-height: 0;
    border: 1px solid #828790;
    background-color: #fff;
}

.editor .toolbar {
    height: 25px;
}

.canvas-box .scrollbar:last-child {
    grid-column: 1;
}

.schematic {
    width: 100%;
    height: 100%;
}

.outline, .handle {
    fill: none;
    stroke: #0000ff;
    shape-rendering: crispEdges;
}

.node {
    fill: #0000ff;
}

.wire {
    fill: none;
    stroke: #0000ff;
}

.shape {
    fill: none;
    stroke: #000;
}

.in {
    stroke: #0080ff;
}

.out {
    stroke: #8000ff;
}

.part {
    font: 15px "Liberation Sans", sans-serif;
}

.name {
    font: 18px "Liberation Sans", sans-serif;
    fill: #800080;
}

.purple {
    fill: #800080;
}

.blue {
    fill: #0000ff;
}

.pen {
    fill: none;
    stroke: #f81cf8;
    stroke-width: 3;
    stroke-linecap: round;
    stroke-linejoin: round;
}

.note {
    font: 16px "Liberation Sans", "Noto Sans CJK SC", sans-serif;
    fill: #ff3b3b;
}

/* Messages */
.messages {
    display: flex;
    gap: 2px;
    height: 274px;
    padding: 5px 1px 0 2px;
}

.side-title {
    display: flex;
    flex-direction: column;
    align-items: center;
    width: 17px;
    margin: 3px 0 3px;
    padding: 1px 0;
    border: 1px solid #a0a0a0;
}

.side-title button {
    height: 14px;
}

.side-title h2 {
    margin-top: auto;
    padding-top: 1px;
    writing-mode: vertical-rl;
    transform: rotate(180deg);
}

.message-area {
    flex: 1;
    display: flex;
    flex-direction: column;
}

.message-panel {
    flex: 1;
    display: flex;
    flex-direction: column;
    gap: 3px;
    padding: 2px 1px;
    border: 1px solid #dcdcdc;
    background-color: #fff;
}

.message-tools {
    display: flex;
    align-items: center;
    gap: 7px;
    height: 24px;
    padding-left: 1px;
}

.message-tools button {
    width: 21px;
    height: 21px;
    border: 1px solid #adadad;
    background-color: #e1e1e1;
}

.message-tools button.all {
    width: 23px;
    border-color: #99d1ff;
    background-color: #cce8ff;
}

.filter-group {
    display: flex;
    gap: 8px;
    padding: 0 1px;
    border: 1px solid #dcdcdc;
}

.message-search {
    display: flex;
    align-items: center;
    gap: 6px;
    width: 340px;
    height: 24px;
    margin-left: 6px;
    padding: 0 3px;
    border: 1px solid #767676;
}

.message-search input {
    flex: 1;
    height: 20px;
}

.caret {
    width: 12px;
    height: 8px;
    fill: none;
    stroke: #222;
    stroke-width: 2;
}

.message-box {
    flex: 1;
    display: flex;
    flex-direction: column;
    justify-content: space-between;
    border: 1px solid #828790;
}

.message-table {
    width: 100%;
    border-collapse: collapse;
    table-layout: fixed;
    font: 13px/16px "Liberation Mono", monospace;
}

.message-table th {
    width: 56px;
    height: 24px;
    padding: 0 0 0 4px;
    border-right: 1px solid #e5e5e5;
    font-weight: normal;
    text-align: center;
}

.message-table th:first-child {
    width: 39px;
    text-align: left;
}

.message-table th:last-child {
    width: auto;
    border-right: none;
    text-align: left;
}

.message-tabs {
    display: flex;
    gap: 1px;
    height: 16px;
}

.message-tabs button {
    position: relative;
    width: 74px;
    height: 15px;
}

.message-tabs button.current {
    width: 58px;
}

.message-tabs svg {
    position: absolute;
    left: 0;
    top: 0;
    width: 100%;
    height: 100%;
    fill: none;
    stroke: #000;
}

.message-tabs .current svg {
    fill: #fff;
}

.message-tabs span {
    position: relative;
}

/* Status bar */
.statusbar {
    display: flex;
    align-items: center;
    justify-content: flex-end;
    height: 20px;
    padding-right: 2px;
}

.percent {
    width: 49px;
    margin-left: 8px;
    padding-left: 4px;
    border-left: 1px solid #d0d0d0;
}

/* Taskbar */
.taskbar {
    position: relative;
    display: flex;
    height: 40px;
    color: #fff;
    background-color: #404040;
    font: 13px/20px Roboto, "Noto Sans CJK SC", sans-serif;
}

.start {
    width: 51px;
    padding-right: 3px;
}

.start svg {
    width: 16px;
    height: 16px;
    fill: #fff;
}

.running {
    gap: 6px;
    width: 160px;
    padding: 2px 4px 0 0;
    border-bottom: 2px solid #bbb;
    background-color: #656565;
}

.running svg {
    width: 22px;
    height: 22px;
}

.tray {
    display: flex;
    align-items: center;
    gap: 8px;
    margin-left: auto;
    margin-right: 4px;
    padding-right: 13px;
    border-right: 1px solid #777;
}

.tray svg {
    width: 16px;
    height: 16px;
    fill: none;
    stroke: #fff;
}

.tray .rec {
    fill: #e81123;
    stroke: none;
}

.tray .solid {
    fill: #fff;
    stroke: none;
}

.tray .ink {
    stroke: #404040;
}

.tray .warn {
    fill: #ffb900;
    stroke: none;
}

.ime {
    font-size: 15px;
}

.clock {
    width: 66px;
    margin-right: 6px;
    text-align: center;
}

.tray .notice {
    width: 24px;
    height: 24px;
}

.notice .badge {
    fill: #404040;
    stroke: #aaa;
}

.notice text {
    font: 14px Roboto, sans-serif;
    fill: #fff;
    stroke: none;
}

.watermark {
    position: absolute;
    right: 11px;
    bottom: 9px;
    font: 16px/20px "Liberation Sans", sans-serif;
    color: rgba(220, 220, 220, 0.6);
}
```
